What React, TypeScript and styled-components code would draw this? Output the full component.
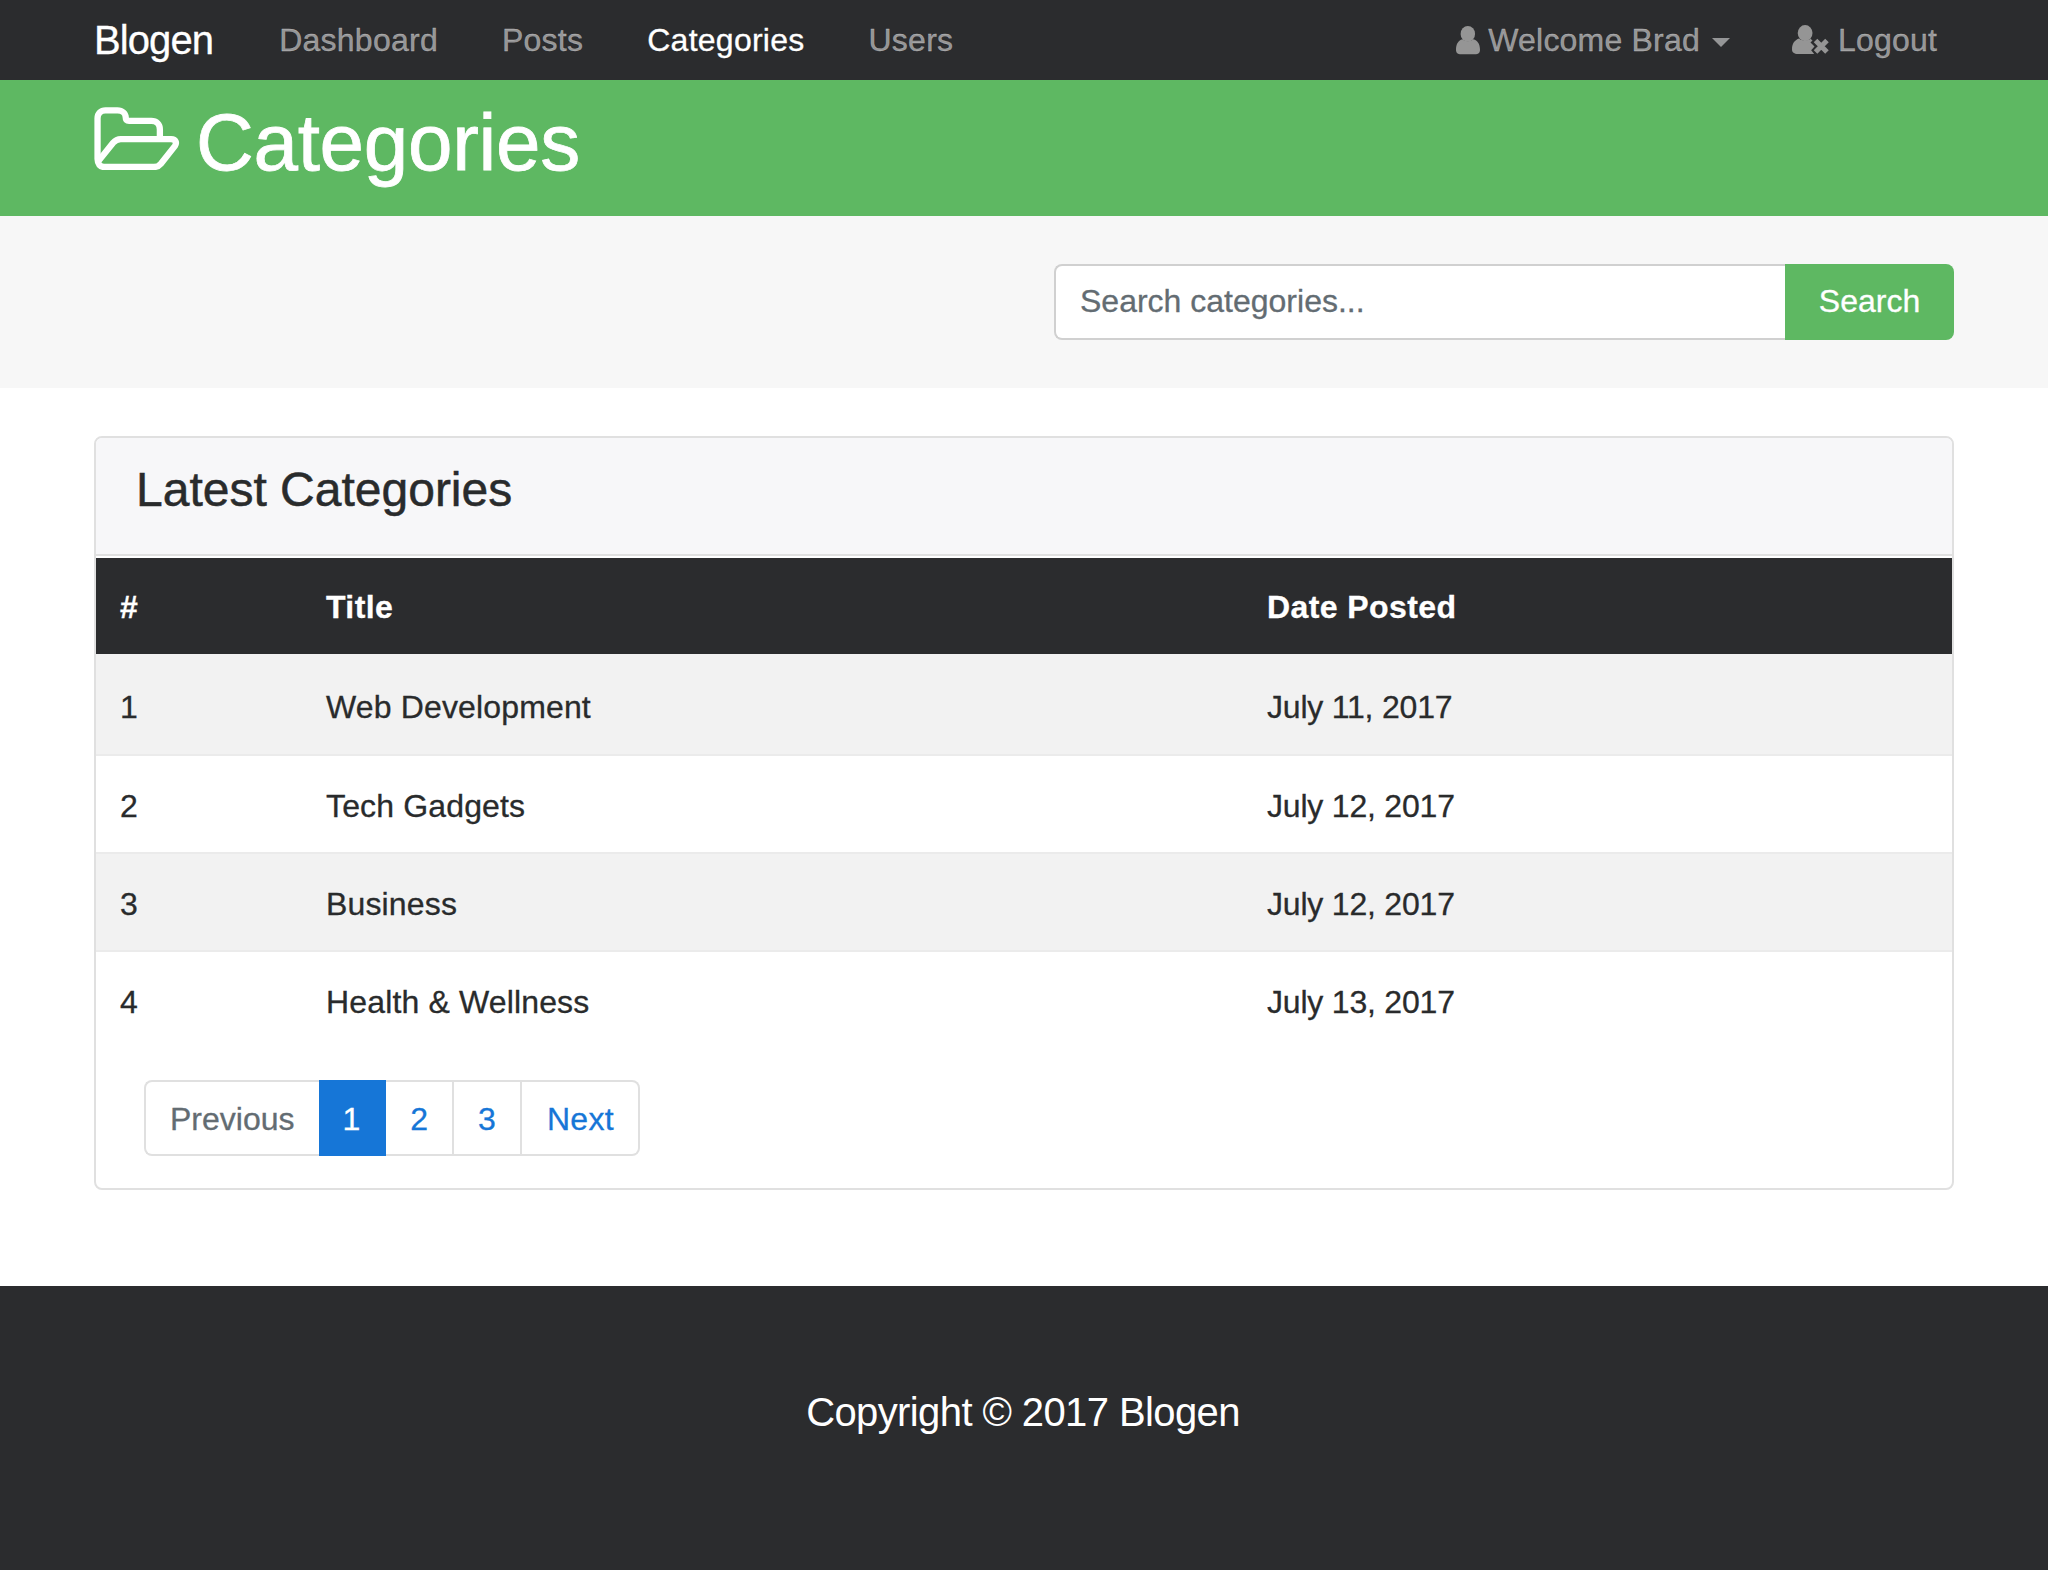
import styled, { createGlobalStyle } from "styled-components";

const dark = "#2b2c2e";
const green = "#5eb862";
const blue = "#1676d7";
const line = "#e0e0e0";

const GlobalStyle = createGlobalStyle`
  * {
    box-sizing: border-box;
  }

  body {
    margin: 0;
    background: #fff;
    color: #292b2c;
    font-family: "Liberation Sans", Arial, sans-serif;
    font-size: 32px;
    line-height: 1.5;
    -webkit-text-stroke: 0.3px;
  }
`;

const Container = styled.div`
  width: 1860px;
  margin: 0 auto;
`;

const NavBar = styled.nav`
  height: 80px;
  background: ${dark};
`;

const NavInner = styled(Container)`
  display: flex;
  align-items: center;
  height: 100%;
`;

const Brand = styled.a`
  margin-right: 34px;
  color: #fff;
  font-size: 40px;
  letter-spacing: -0.9px;
`;

const NavList = styled.div`
  display: flex;
  align-items: center;
  letter-spacing: 0.25px;
`;

const NavLink = styled.a<{ $active?: boolean }>`
  padding: 0 32px;
  color: ${(p) => (p.$active ? "#fff" : "rgba(255, 255, 255, 0.5)")};
`;

const UserMenu = styled.div`
  display: flex;
  align-items: center;
  gap: 62px;
  margin-left: auto;
  padding-right: 17px;
  letter-spacing: 0.2px;
`;

const UserLink = styled.a`
  display: flex;
  align-items: center;
  gap: 8px;
  color: rgba(255, 255, 255, 0.5);
`;

const Caret = styled.span`
  width: 0;
  height: 0;
  margin: 4px 0 0 4px;
  border-top: 9px solid rgba(255, 255, 255, 0.5);
  border-left: 9px solid transparent;
  border-right: 9px solid transparent;
`;

const Header = styled.header`
  padding: 19px 0 29px;
  background: ${green};
  color: #fff;
`;

const PageTitle = styled.h1`
  display: flex;
  align-items: center;
  gap: 16px;
  margin: 0;
  font-size: 80px;
  font-weight: 400;
  line-height: 88px;
  letter-spacing: -0.3px;
  -webkit-text-stroke: 0.8px;
`;

const TitleIcon = styled.span`
  display: flex;
  margin-top: -10px;
`;

const SearchBand = styled.section`
  padding: 48px 0;
  background: #f7f7f7;
`;

const SearchForm = styled.form`
  display: flex;
  width: 900px;
  margin-left: auto;
`;

const SearchInput = styled.input`
  flex: 1;
  min-width: 0;
  height: 76px;
  padding: 0 24px 2px;
  border: 2px solid #d0d0d0;
  border-right: 0;
  border-radius: 8px 0 0 8px;
  background: #fff;
  color: #464a4c;
  font: inherit;

  &::placeholder {
    color: #636c72;
    opacity: 1;
  }
`;

const SearchButton = styled.button`
  width: 169px;
  height: 76px;
  padding: 0 0 2px;
  border: 0;
  border-radius: 0 8px 8px 0;
  background: ${green};
  color: #fff;
  font: inherit;
`;

const Main = styled.main`
  padding: 48px 0 96px;
`;

const Card = styled.div`
  border: 2px solid ${line};
  border-radius: 8px;
  overflow: hidden;
`;

const CardHeader = styled.div`
  height: 118px;
  padding: 25px 40px 0;
  border-bottom: 2px solid ${line};
  background: #f7f7f9;
`;

const CardTitle = styled.h4`
  margin: 0;
  font-size: 48px;
  font-weight: 400;
  line-height: 53px;
  -webkit-text-stroke: 0.5px;
`;

const Table = styled.table`
  width: 100%;
  margin-top: 2px;
  border-collapse: collapse;
  table-layout: fixed;
`;

const Col = styled.col<{ $width: number }>`
  width: ${(p) => p.$width}px;
`;

const HeadCell = styled.th`
  height: 96px;
  padding: 2px 24px 0;
  background: ${dark};
  color: #fff;
  font-weight: 700;
  letter-spacing: 0.4px;
  text-align: left;
`;

const Row = styled.tr`
  &:nth-child(odd) {
    background: #f2f2f2;
  }
`;

const Cell = styled.td<{ $spacing?: number }>`
  padding: 26px 24px 22px;
  border-top: 2px solid #ebebeb;
  line-height: 48px;
  letter-spacing: ${(p) => p.$spacing ?? 0}px;

  ${Row}:first-child & {
    padding-top: 29px;
    padding-bottom: 23px;
    border-top: 0;
  }
`;

const Pagination = styled.div`
  display: flex;
  width: fit-content;
  margin: 32px 0 32px 48px;
`;

const PageLink = styled.a<{ $active?: boolean; $muted?: boolean }>`
  height: 76px;
  padding: 13px 24px 11px;
  border: solid ${line};
  border-width: 2px 2px 2px 0;
  background: ${(p) => (p.$active ? blue : "#fff")};
  border-color: ${(p) => (p.$active ? blue : line)};
  color: ${(p) => (p.$active ? "#fff" : p.$muted ? "#636c72" : blue)};
  line-height: 48px;

  &:first-child {
    border-width: 2px 0 2px 2px;
    border-radius: 8px 0 0 8px;
  }

  &:last-child {
    padding-left: 25px;
    letter-spacing: 0.3px;
    border-radius: 0 8px 8px 0;
  }
`;

const Footer = styled.footer`
  height: 284px;
  padding: 96px 2px 0 0;
  background: ${dark};
  color: #fff;
  font-size: 40px;
  line-height: 60px;
  letter-spacing: -0.6px;
  text-align: center;
  -webkit-text-stroke: 0;
`;

const FolderIcon = () => (
  <svg width="86" height="63" viewBox="42 48 258 190" fill="none" stroke="#fff" strokeWidth="19" strokeLinejoin="round">
    <path d="M52 205V82C52 67 62 58 76 58H112C127 58 137 68 137 80C137 87 140 90 147 90H214C230 90 240 100 240 116V140" />
    <path d="M52 205C52 220 60 229 72 229H222C232 229 238 225 243 219L285 166C292 156 288 145 274 145H122C112 145 105 149 99 156L54 212" />
  </svg>
);

const UserIcon = () => (
  <svg width="24" height="29" viewBox="52 46 73 88" fill="#959595">
    <ellipse cx="88" cy="70" rx="22" ry="24" />
    <path d="M52 118C52 100 60 89 71 86C80 94 96 94 105 86C117 89 125 100 125 118C125 128 119 132 110 132H67C58 132 52 128 52 118Z" />
  </svg>
);

const UserTimesIcon = () => (
  <svg width="38" height="31" viewBox="33 46 113 92" fill="#959595">
    <ellipse cx="72" cy="70" rx="22" ry="24" />
    <path d="M33 118C33 100 42 90 54 86C62 94 80 94 88 87L94 92L88 98L100 110L90 121L99 132H50C40 132 33 128 33 118Z" />
    <path d="M103 92L137 126M137 92L103 126" fill="none" stroke="#959595" strokeWidth="15" />
  </svg>
);

const categories = [
  { id: 1, title: "Web Development", date: "July 11, 2017" },
  { id: 2, title: "Tech Gadgets", date: "July 12, 2017" },
  { id: 3, title: "Business", date: "July 12, 2017" },
  { id: 4, title: "Health & Wellness", date: "July 13, 2017" },
];

function App() {
  return (
    <>
      <GlobalStyle />
      <NavBar>
        <NavInner>
          <Brand>Blogen</Brand>
          <NavList>
            <NavLink>Dashboard</NavLink>
            <NavLink>Posts</NavLink>
            <NavLink $active>Categories</NavLink>
            <NavLink>Users</NavLink>
          </NavList>
          <UserMenu>
            <UserLink>
              <UserIcon />
              Welcome Brad
              <Caret />
            </UserLink>
            <UserLink>
              <UserTimesIcon />
              Logout
            </UserLink>
          </UserMenu>
        </NavInner>
      </NavBar>

      <Header>
        <Container>
          <PageTitle>
            <TitleIcon>
              <FolderIcon />
            </TitleIcon>
            Categories
          </PageTitle>
        </Container>
      </Header>

      <SearchBand>
        <Container>
          <SearchForm>
            <SearchInput type="text" placeholder="Search categories..." />
            <SearchButton type="button">Search</SearchButton>
          </SearchForm>
        </Container>
      </SearchBand>

      <Main>
        <Container>
          <Card>
            <CardHeader>
              <CardTitle>Latest Categories</CardTitle>
            </CardHeader>
            <Table>
              <colgroup>
                <Col $width={206} />
                <Col $width={941} />
                <Col $width={709} />
              </colgroup>
              <thead>
                <tr>
                  <HeadCell>#</HeadCell>
                  <HeadCell>Title</HeadCell>
                  <HeadCell>Date Posted</HeadCell>
                </tr>
              </thead>
              <tbody>
                {categories.map((c) => (
                  <Row key={c.id}>
                    <Cell>{c.id}</Cell>
                    <Cell $spacing={0.15}>{c.title}</Cell>
                    <Cell $spacing={-0.2}>{c.date}</Cell>
                  </Row>
                ))}
              </tbody>
            </Table>
            <Pagination>
              <PageLink $muted>Previous</PageLink>
              <PageLink $active>1</PageLink>
              <PageLink>2</PageLink>
              <PageLink>3</PageLink>
              <PageLink>Next</PageLink>
            </Pagination>
          </Card>
        </Container>
      </Main>

      <Footer>Copyright © 2017 Blogen</Footer>
    </>
  );
}

export default App;
